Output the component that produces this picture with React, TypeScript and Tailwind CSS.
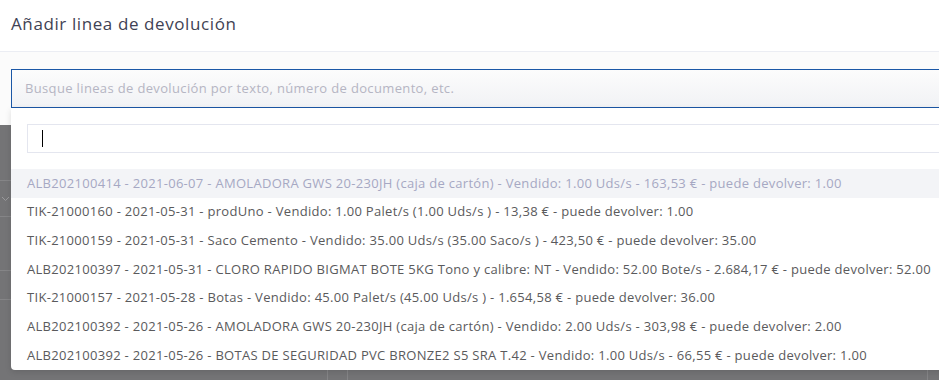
import React from 'react';

interface ReturnLine {
  text: string;
  active?: boolean;
}

const lines: ReturnLine[] = [
  {
    text: 'ALB202100414 - 2021-06-07 - AMOLADORA GWS 20-230JH (caja de cartón) - Vendido: 1.00 Uds/s - 163,53 € - puede devolver: 1.00',
    active: true,
  },
  { text: 'TIK-21000160 - 2021-05-31 - prodUno - Vendido: 1.00 Palet/s (1.00 Uds/s ) - 13,38 € - puede devolver: 1.00' },
  { text: 'TIK-21000159 - 2021-05-31 - Saco Cemento - Vendido: 35.00 Uds/s (35.00 Saco/s ) - 423,50 € - puede devolver: 35.00' },
  {
    text: 'ALB202100397 - 2021-05-31 - CLORO RAPIDO BIGMAT BOTE 5KG Tono y calibre: NT - Vendido: 52.00 Bote/s - 2.684,17 € - puede devolver: 52.00',
  },
  { text: 'TIK-21000157 - 2021-05-28 - Botas - Vendido: 45.00 Palet/s (45.00 Uds/s ) - 1.654,58 € - puede devolver: 36.00' },
  {
    text: 'ALB202100392 - 2021-05-26 - AMOLADORA GWS 20-230JH (caja de cartón) - Vendido: 2.00 Uds/s - 303,98 € - puede devolver: 2.00',
  },
  {
    text: 'ALB202100392 - 2021-05-26 - BOTAS DE SEGURIDAD PVC BRONZE2 S5 SRA T.42 - Vendido: 1.00 Uds/s - 66,55 € - puede devolver: 1.00',
  },
];

const font = { fontFamily: '"Open Sans", Arial, sans-serif' };

export default function App() {
  return (
    <div className="relative h-[380px] w-[939px] overflow-hidden bg-[#747476]" style={font}>
      {/* Modal (cropped, runs past both edges) */}
      <div className="flex h-[125px] w-[1000px] flex-col bg-[#fbfbfb]">
        <div className="flex h-[52px] items-center border-b border-[#ebedf3] bg-white pl-[11px] pb-[4px]">
          <h3 className="text-[17px] font-medium tracking-[0.6px] text-[#3f4254]">Añadir linea de devolución</h3>
        </div>
        <div className="pl-[11px] pt-[17px]">
          <div className="flex h-[39px] items-center border border-r-0 border-[#1b57a6] bg-gradient-to-b from-[#fcfcfc] to-[#f1f2f5] pl-[13px]">
            <span className="text-[13px] tracking-[0.35px] text-[#b5b5c3]">
              Busque lineas de devolución por texto, número de documento, etc.
            </span>
          </div>
        </div>
      </div>

      {/* Page under the backdrop */}
      <div className="flex h-[255px] flex-col">
        <div className="h-[56px] w-[11px] border-b border-[#858587]" />
        <div className="flex h-[36px] w-[11px] items-center justify-center border-b border-[#858587]">
          <svg width="9" height="6" viewBox="0 0 9 6" fill="none">
            <path d="M1 1l3.5 3.5L8 1" stroke="#9a9a9c" strokeWidth="1" />
          </svg>
        </div>
        <div className="h-[54px] w-[11px] border-b border-[#858587]" />
        <div className="h-[29px] w-[11px] border-b border-[#858587]" />
        <div className="h-[68px] w-[11px]" />
        <div className="flex h-[12px]">
          <div className="w-[328px] border-r border-[#858587]" />
          <div className="w-[20px] border-r border-[#858587]" />
          <div className="w-[580px] border-r border-[#858587]" />
        </div>
      </div>

      {/* Dropdown menu */}
      <div className="absolute left-[11px] top-[108px] w-[1000px] rounded-bl-[4px] bg-white pt-[16px] shadow-[0_2px_6px_rgba(0,0,0,0.12)]">
        <div className="pl-[16px]">
          <div className="flex h-[29px] items-center border border-r-0 border-[#e4e6ef] bg-white pl-[14px]">
            <span className="h-[17px] w-px bg-black" />
          </div>
        </div>
        <div className="mt-[16px] flex flex-col">
          {lines.map((l, i) => (
            <div
              key={i}
              className={`flex h-[28.67px] items-center whitespace-nowrap pl-[16px] text-[13px] tracking-[0.3px] ${
                l.active ? 'bg-[#f3f4f7] text-[#a6a8c3]' : 'text-[#5a5a5c]'
              }`}
            >
              {l.text}
            </div>
          ))}
        </div>
      </div>
    </div>
  );
}
